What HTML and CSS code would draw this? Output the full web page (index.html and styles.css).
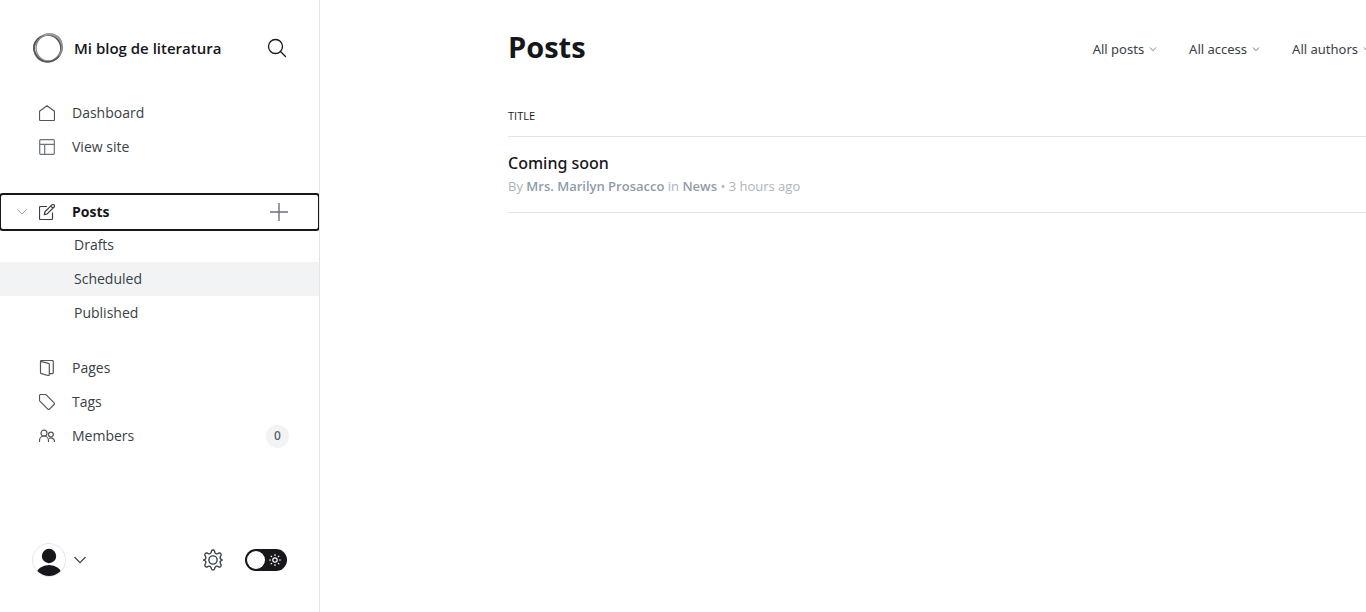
FILE: index.html
```html
<!DOCTYPE html>
<html lang="en">
<head>
<meta charset="utf-8">
<meta name="viewport" content="width=device-width, initial-scale=1">
<title>Posts - Mi blog de literatura</title>
<link rel="stylesheet" href="styles.css">
</head>
<body>
<div class="app">
  <aside class="sidebar">
    <header class="brand">
      <svg class="logo" viewBox="0 0 32 32" fill="none" aria-hidden="true">
        <ellipse cx="15.500" cy="16.200" rx="13.500" ry="13.200" stroke="#4a4a4a" stroke-width="1.700"/>
        <ellipse cx="15.500" cy="16.500" rx="14" ry="13" stroke="#777" stroke-width="1" transform="rotate(-40 16 16)"/>
        <ellipse cx="17" cy="15.200" rx="13" ry="13.700" stroke="#8a8a8a" stroke-width="1.300" transform="rotate(20 16 16)"/>
        <path d="M12 3.200C20 .5 28 4 29.300 11" stroke="#999" stroke-width="2"/>
        <path d="M30 14c0 6-3 11-8 14" stroke="#888" stroke-width="2"/>
        <path d="M3 10C0 17 4 26 11 29c6 2 12 0 16-5" stroke="#555" stroke-width="1.300"/>
      </svg>
      <span class="brand-name">Mi blog de literatura</span>
      <button class="icon-button search" aria-label="Search">
        <svg width="20" height="20" viewBox="0 0 20 20" fill="none" stroke="#15171a" stroke-width="1.300" stroke-linecap="round"><circle cx="8.500" cy="8.500" r="7"/><path d="M13.500 13.500l5 5"/></svg>
      </button>
    </header>

    <nav class="nav" aria-label="Main">
      <ul class="group">
        <li><a class="item" href="#dashboard">
          <svg class="icon" viewBox="0 0 16 16"><path d="M.5 6.200L8 .7l7.500 5.500v8.300a1 1 0 0 1-1 1h-13a1 1 0 0 1-1-1z"/></svg>Dashboard</a></li>
        <li><a class="item" href="#site">
          <svg class="icon soft" viewBox="0 0 16 16"><rect x=".7" y=".7" width="14.600" height="14.600" rx="1"/><path d="M.7 5.300h14.600M5.700 5.300v10"/></svg>View site</a></li>
      </ul>

      <ul class="group">
        <li class="current">
          <svg class="disclosure" viewBox="0 0 10 6" fill="none" stroke="#9aa5af" aria-hidden="true"><path d="M.5.500L5 5 9.500.500"/></svg>
          <a class="item" href="#posts">
            <svg class="icon dark" viewBox="0 0 16 16"><path d="M8 2.500H1.500a1 1 0 0 0-1 1v11a1 1 0 0 0 1 1h11a1 1 0 0 0 1-1V8.500"/><path d="M6 7.700L12.900.9a1.400 1.400 0 0 1 2.200 2.100L8.200 9.900l-3 .8zM11.800 2l2.200 2.200"/></svg>Posts</a>
          <button class="icon-button add" aria-label="New post">
            <svg width="18" height="18" viewBox="0 0 18 18" fill="none" stroke="#6b7279" stroke-width="1.400"><path d="M9 0v18M0 9h18"/></svg>
          </button>
        </li>
        <li>
          <ul class="submenu">
            <li><a class="item subitem" href="#drafts">Drafts</a></li>
            <li><a class="item subitem hovered" href="#scheduled">Scheduled</a></li>
            <li><a class="item subitem" href="#published">Published</a></li>
          </ul>
        </li>
      </ul>

      <ul class="group">
        <li><a class="item" href="#pages">
          <svg class="icon" viewBox="0 0 16 16"><path d="M1.500 1.300l8 2a1 1 0 0 1 .8 1v10.300a.9.900 0 0 1-1.100.900l-6.900-1.900a1 1 0 0 1-.8-1z"/><path d="M1.500 1.300Q1.800.500 2.600.500h10.400a1.300 1.300 0 0 1 1.300 1.300v10.700a1.200 1.200 0 0 1-1.200 1.200h-2.800"/></svg>Pages</a></li>
        <li><a class="item" href="#tags">
          <svg class="icon" viewBox="0 0 16 16"><path d="M.5 1.800A1.300 1.300 0 0 1 1.800.500h4.400a1.500 1.500 0 0 1 1 .4l7.900 7.900a1.200 1.200 0 0 1 0 1.700l-4.600 4.600a1.200 1.200 0 0 1-1.700 0L.9 7.200a1.500 1.500 0 0 1-.4-1z"/></svg>Tags</a></li>
        <li><a class="item" href="#members">
          <svg class="icon" viewBox="0 0 16 16"><circle cx="5" cy="5.200" r="3"/><path d="M.5 14v-1.500a4.500 4.500 0 0 1 9 0V14"/><circle cx="11.900" cy="6.600" r="2.400"/><path d="M10 10.500a3.600 3.600 0 0 1 5.500 2.800v.7"/></svg>Members<span class="count">0</span></a></li>
      </ul>
    </nav>

    <footer class="tools">
      <button class="icon-button account" aria-label="Account menu">
        <svg width="34" height="34" viewBox="0 0 34 34"><defs><clipPath id="face"><circle cx="17" cy="17" r="16"/></clipPath></defs><circle cx="17" cy="17" r="16.500" fill="#fff" stroke="#e3e7ea"/><g clip-path="url(#face)" fill="#15171a"><circle cx="17" cy="13" r="7.200"/><ellipse cx="17" cy="31" rx="12.500" ry="9"/></g></svg>
        <svg width="12" height="8" viewBox="0 0 12 8" fill="none" stroke="#394047" stroke-width="1.200"><path d="M.5 1L6 6.700 11.500 1"/></svg>
      </button>
      <button class="icon-button settings" aria-label="Settings">
        <svg width="22" height="22" viewBox="0 0 24 24" fill="none" stroke="#394047" stroke-width="1.500" stroke-linejoin="round"><circle cx="12" cy="12" r="4.500"/><path d="M13.600 2.200l.5 1.600a2.300 2.300 0 0 0 3.100 1.300l1.500-.8a2 2 0 0 1 2.100 2.700L20 8.500a2.300 2.300 0 0 0 1.200 3l1 .5-1 .5a2.300 2.300 0 0 0-1.200 3l.8 1.500a2 2 0 0 1-2.100 2.700l-1.500-.8a2.300 2.300 0 0 0-3.100 1.300l-.5 1.600a1.700 1.700 0 0 1-3.200 0l-.5-1.600a2.300 2.300 0 0 0-3.100-1.300l-1.500.8A2 2 0 0 1 3.200 17L4 15.500a2.300 2.300 0 0 0-1.300-3.100l-1-.4 1-.4A2.300 2.300 0 0 0 4 8.500L3.200 7a2 2 0 0 1 2.100-2.700l1.500.8a2.300 2.300 0 0 0 3.100-1.300l.5-1.600a1.700 1.700 0 0 1 3.200 0z"/></svg>
      </button>
      <button class="theme" role="switch" aria-checked="false" aria-label="Night mode">
        <span class="knob"></span>
        <svg width="12" height="12" viewBox="0 0 12 12" fill="none" stroke="#fff" stroke-width="1.200" stroke-linecap="round"><circle cx="6" cy="6" r="2.200"/><path d="M6 .6v.9M6 10.500v.9M.6 6h.9M10.500 6h.9M2.100 2.100l.6.600M9.300 9.300l.6.600M2.100 9.900l.6-.6M9.300 2.700l.6-.6"/></svg>
      </button>
    </footer>
  </aside>

  <main class="main">
    <div class="content">
      <header class="page-head">
        <h1>Posts</h1>
        <div class="filters">
          <button class="filter">All posts <svg class="caret" viewBox="0 0 8 5"><path d="M1 .5L4 3.800 7 .5"/></svg></button>
          <button class="filter">All access <svg class="caret" viewBox="0 0 8 5"><path d="M1 .5L4 3.800 7 .5"/></svg></button>
          <button class="filter">All authors <svg class="caret" viewBox="0 0 8 5"><path d="M1 .5L4 3.800 7 .5"/></svg></button>
        </div>
      </header>
      <table class="posts">
        <thead><tr><th scope="col">TITLE</th></tr></thead>
        <tbody>
          <tr><td>
            <a class="post" href="#coming-soon">
              <span class="post-title">Coming soon</span>
              <span class="post-meta">By <b>Mrs. Marilyn Prosacco</b> in <b>News</b> • 3 hours ago</span>
            </a>
          </td></tr>
        </tbody>
      </table>
    </div>
  </main>
</div>
</body>
</html>
```
FILE: styles.css
```css
* { box-sizing: border-box; }
body {
  margin: 0;
  background: #fff;
  color: #15171a;
  font: 14px/20px "Open Sans", "Noto Sans", sans-serif;
}
ul { list-style: none; margin: 0; padding: 0; }
a { color: inherit; text-decoration: none; }
button { font: inherit; color: inherit; background: none; border: 0; padding: 0; }
svg { display: block; flex: none; }

.app { display: flex; min-height: 100vh; }

.sidebar {
  flex: none;
  width: 320px;
  display: flex;
  flex-direction: column;
  padding: 32px 0 35px;
  border-right: 1px solid #e3e6e8;
  overflow: hidden;
}
.brand { display: flex; align-items: center; height: 32px; padding: 0 32px; }
.logo { width: 32px; height: 32px; }
.brand-name { margin-left: 10px; font-size: 15px; font-weight: 600; }
.icon-button { display: flex; align-items: center; }
.search { margin-left: auto; }

.nav { padding-top: 32px; }
.group { margin-bottom: 21px; }
.group:first-child { margin-bottom: 30px; }
.item {
  display: flex;
  align-items: center;
  flex: 1;
  height: 34px;
  padding: 0 30px 0 39px;
  color: #394047;
}
.icon {
  width: 16px;
  height: 16px;
  margin-right: 17px;
  fill: none;
  stroke: #50575e;
  stroke-width: 1.2px;
  stroke-linejoin: round;
}
.icon.soft { stroke: #6b7279; }
.icon.dark { stroke: #394047; }
.current {
  display: flex;
  align-items: center;
  height: 36px;
  outline: 2px solid #15171a;
  outline-offset: -1px;
  border-radius: 3px;
}
.current .item { padding: 0 0 0 12px; color: #15171a; font-weight: 700; }
.disclosure { width: 10px; height: 6px; margin-left: 17px; }
.add { margin-right: 31px; }
.submenu { margin-top: -2px; }
.subitem { padding-left: 74px; }
.hovered { background: #f1f3f4; }
.count {
  display: flex;
  align-items: center;
  justify-content: center;
  min-width: 23px;
  height: 23px;
  margin-left: auto;
  border-radius: 12px;
  background: #f1f3f4;
  font-size: 12px;
  font-weight: 600;
  color: #5d6670;
}

.tools { display: flex; align-items: center; margin-top: auto; padding: 0 32px; }
.account { gap: 8px; }
.settings { margin-left: auto; }
.theme {
  display: flex;
  align-items: center;
  justify-content: space-between;
  width: 42px;
  height: 22px;
  margin-left: 21px;
  padding: 0 6px 0 2px;
  border-radius: 11px;
  background: #15171a;
}
.knob { width: 18px; height: 18px; border-radius: 50%; background: #fff; }

.main { flex: 1; min-width: 0; padding: 27px 0 0 188px; overflow: hidden; }
.content { min-width: 863px; }
.page-head { display: flex; align-items: center; justify-content: space-between; height: 40px; }
h1 { margin: 0; font-size: 29px; line-height: 40px; font-weight: 700; }
.filters { display: flex; gap: 32px; padding-top: 4px; }
.filter { display: flex; align-items: center; gap: 5px; font-family: "Noto Sans", sans-serif; font-size: 13px; color: #394047; }
.caret { width: 8px; height: 5px; fill: none; stroke: #7c8289; }

.posts { width: 100%; margin-top: 29px; border-collapse: collapse; }
.posts th {
  height: 40px;
  padding: 0;
  border-bottom: 1px solid #e3e6e8;
  font-size: 11px;
  font-weight: 500;
  text-align: left;
}
.posts td { padding: 15px 0 14px; border-bottom: 1px solid #e3e6e8; }
.post { display: block; }
.post-title { display: block; line-height: 22px; font-family: "Noto Sans", sans-serif; font-size: 16px; font-weight: 500; }
.post-meta { display: block; line-height: 24px; font-size: 13px; color: #abb4be; }
.post-meta b { font-weight: 600; color: #8e9cac; }
```
